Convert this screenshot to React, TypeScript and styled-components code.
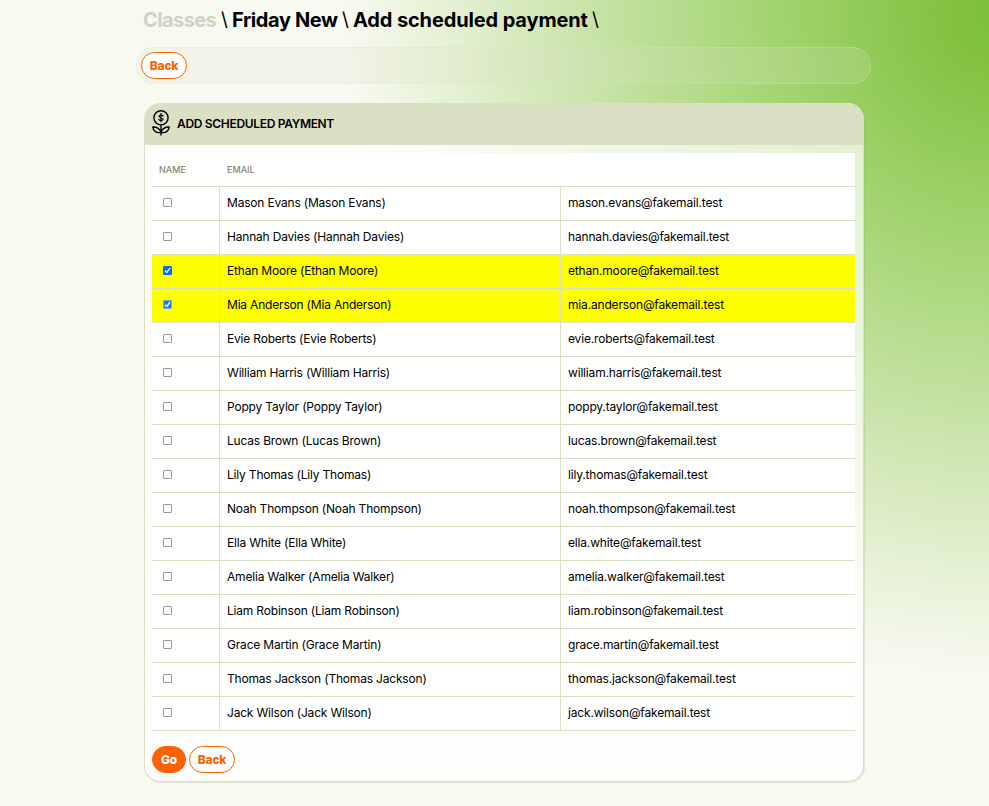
import React, { useState } from "react";
import styled, { createGlobalStyle } from "styled-components";

const GlobalStyle = createGlobalStyle`
  * { box-sizing: border-box; }
  html { height: 100%; }
  body {
    margin: 0;
    min-height: 806px;
    font-family: Inter, "Open Sans", sans-serif;
    color: #000;
    background: radial-gradient(ellipse 655px 664px at 1000px 10px,
      #7dbf38 0%, #82c23f 8%, #99cf63 27%, #add97f 43%, #cae4ab 64%, #e3f0d1 83%, #f8f9f0 100%) #f8f9f0;
  }
`;

const Page = styled.main`
  width: 735px;
  margin-left: 136px;
  padding-top: 5px;
`;

const Breadcrumbs = styled.h1`
  display: flex;
  align-items: center;
  height: 29px;
  margin: 0 0 13px 7px;
  font-size: 20px;
  font-weight: 700;
  white-space: pre;
`;

const Crumb = styled.span<{ $width: number; $muted?: boolean; $tracking: number }>`
  width: ${(p) => p.$width}px;
  letter-spacing: ${(p) => p.$tracking}px;
  color: ${(p) => (p.$muted ? "#d0d3c4" : "#000")};
`;

const Slash = styled.span`
  width: 16px;
  padding-left: 5px;
  font-size: 19px;
  font-weight: 400;
`;

const Toolbar = styled.nav`
  display: flex;
  align-items: center;
  height: 37px;
  padding: 0 4px;
  border: 1px solid rgba(219, 223, 196, 0.28);
  border-radius: 18px;
  background: rgba(219, 223, 196, 0.2);
`;

const Button = styled.button<{ $primary?: boolean }>`
  width: ${(p) => (p.$primary ? 34 : 46)}px;
  height: 27px;
  padding: 0;
  border: 1px solid #ff6000;
  border-radius: 14px;
  background: ${(p) => (p.$primary ? "#ff6000" : "#fff")};
  color: ${(p) => (p.$primary ? "#fff" : "#ff6000")};
  font: 800 12px Inter, sans-serif;
  letter-spacing: -0.15px;
`;

const Panel = styled.section`
  width: 720px;
  height: 679px;
  margin: 19px 0 0 8px;
  overflow: hidden;
  border: 1px solid #dbdfc4;
  border-top: 0;
  border-radius: 16px;
  background: rgba(255, 255, 255, 0.7);
  box-shadow: 1px 1px 1px rgba(150, 155, 110, 0.2);
`;

const PanelHeader = styled.header`
  display: flex;
  align-items: center;
  gap: 7px;
  height: 42px;
  padding: 0 0 2px 7px;
  background: #dbdfc4;
`;

const PanelTitle = styled.h2`
  margin: 0;
  font-size: 12px;
  font-weight: 600;
  letter-spacing: -0.32px;
`;

const Table = styled.div`
  width: 703px;
  margin: 8px 0 0 7px;
  background: #fff;
`;

const Row = styled.label<{ $selected?: boolean }>`
  display: grid;
  grid-template-columns: 68px 341px 1fr;
  height: 34px;
  border-bottom: 1px solid #dbdfc4;
  background: ${(p) => (p.$selected ? "#ff0" : "#fff")};
`;

const HeadCell = styled.span`
  padding: 0 7px;
  font-size: 9px;
  font-weight: 500;
  line-height: 34px;
  color: #85876f;
`;

const Cell = styled.span<{ $tracking?: number }>`
  padding-left: 7px;
  font-size: 12px;
  line-height: 32px;
  letter-spacing: ${(p) => p.$tracking ?? 0}px;
  border-right: 1px solid #dbdfc4;
  &:last-child { border-right: 0; }
`;

const CheckCell = styled(Cell)`
  display: flex;
  align-items: center;
  padding: 0 0 2px 11px;
`;

const HiddenInput = styled.input`
  appearance: none;
  width: 0;
  height: 0;
  margin: 0;
`;

const Box = styled.span<{ $checked: boolean; $focused?: boolean }>`
  display: flex;
  width: 9px;
  height: 9px;
  border: 1px solid ${(p) => (p.$focused ? "#73b0ee" : p.$checked ? "#0869ff" : "#9a9a9a")};
  border-radius: 1px;
  background: ${(p) => (p.$checked ? (p.$focused ? "#207be8" : "#0869ff") : "#fff")};
`;

const Actions = styled.footer`
  display: flex;
  gap: 3px;
  padding: 15px 7px 0;
`;

const CoinFlower = () => (
  <svg width="18" height="26" viewBox="0 0 18 26" fill="none" stroke="#000" strokeWidth="1.35" strokeLinecap="round" strokeLinejoin="round">
    <circle cx="9" cy="7.8" r="7.1" />
    <path d="M9 3.6v8.2M11.1 5.9C10.6 4.9 7.1 4.6 7 6.3c-.1 1.8 4.1 1 4.1 3-.1 1.8-3.7 1.5-4.2.2" strokeWidth="1.15" />
    <path d="M9 15v10M9 22.3C7.8 18.7 4.6 16.9.8 17c.2 4.1 3.8 6.5 8.2 5.3ZM9 22.3c1.2-3.6 4.4-5.4 8.2-5.3-.2 4.1-3.8 6.5-8.2 5.3Z" />
  </svg>
);

const names = [
  "Mason Evans", "Hannah Davies", "Ethan Moore", "Mia Anderson",
  "Evie Roberts", "William Harris", "Poppy Taylor", "Lucas Brown",
  "Lily Thomas", "Noah Thompson", "Ella White", "Amelia Walker",
  "Liam Robinson", "Grace Martin", "Thomas Jackson", "Jack Wilson",
];

export default function App() {
  const [selected, setSelected] = useState(["Ethan Moore", "Mia Anderson"]);
  const toggle = (name: string) =>
    setSelected((s) => (s.includes(name) ? s.filter((n) => n !== name) : [...s, name]));

  return (
    <>
      <GlobalStyle />
      <Page>
        <Breadcrumbs>
          <Crumb $width={73} $tracking={-0.6} $muted>Classes</Crumb>
          <Slash>\</Slash>
          <Crumb $width={105} $tracking={-0.4}>Friday New</Crumb>
          <Slash>\</Slash>
          <Crumb $width={234} $tracking={-0.13}>Add scheduled payment</Crumb>
          <Slash>\</Slash>
        </Breadcrumbs>
        <Toolbar><Button>Back</Button></Toolbar>
        <Panel>
          <PanelHeader>
            <CoinFlower />
            <PanelTitle>ADD SCHEDULED PAYMENT</PanelTitle>
          </PanelHeader>
          <Table>
            <Row as="div">
              <HeadCell>NAME</HeadCell>
              <HeadCell>EMAIL</HeadCell>
            </Row>
            {names.map((name) => {
              const checked = selected.includes(name);
              return (
                <Row key={name} $selected={checked}>
                  <CheckCell>
                    <HiddenInput type="checkbox" checked={checked} onChange={() => toggle(name)} />
                    <Box $checked={checked} $focused={checked && name === "Mia Anderson"}>
                      {checked && (
                        <svg width="7" height="7" viewBox="0 0 7 7" fill="none" stroke="#fff" strokeWidth="1.4">
                          <path d="M1 3.7 2.8 5.4 6 1.2" />
                        </svg>
                      )}
                    </Box>
                  </CheckCell>
                  <Cell $tracking={-0.19}>{name} ({name})</Cell>
                  <Cell $tracking={-0.17}>{name.toLowerCase().replace(" ", ".")}@fakemail.test</Cell>
                </Row>
              );
            })}
          </Table>
          <Actions>
            <Button $primary>Go</Button>
            <Button>Back</Button>
          </Actions>
        </Panel>
      </Page>
    </>
  );
}
